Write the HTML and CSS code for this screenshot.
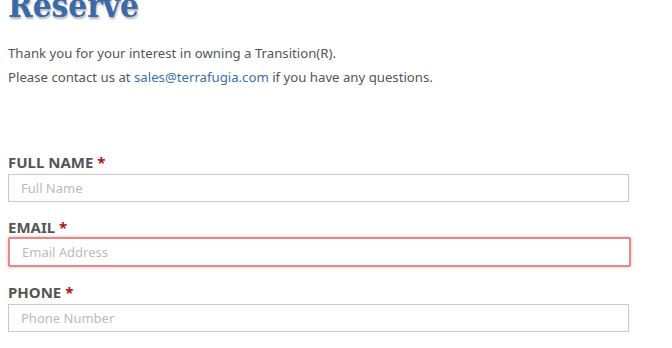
FILE: index.html
```html
<!DOCTYPE html>
<html lang="en">
<head>
<meta charset="UTF-8">
<meta name="viewport" content="width=device-width, initial-scale=1.0">
<title>Reserve</title>
<link rel="stylesheet" href="styles.css">
</head>
<body>

<h1 class="title">Reserve</h1>

<div class="intro">
    <p>Thank you for your interest in owning a Transition(R).</p>
    <p>Please contact us at <a href="#">sales@terrafugia.com</a> if you have any questions.</p>
</div>

<!-- RESERVE FORM -->
<form class="reserve-form">
    <div class="field">
        <label>FULL NAME <span class="req">*</span></label>
        <input type="text" placeholder="Full Name">
    </div>
    <div class="field">
        <label>EMAIL <span class="req">*</span></label>
        <input type="text" class="error" placeholder="Email Address">
    </div>
    <div class="field">
        <label>PHONE <span class="req">*</span></label>
        <input type="text" placeholder="Phone Number">
    </div>
    <div class="field">
        <label>COUNTRY <span class="req">*</span></label>
    </div>
</form>

</body>
</html>
```

FILE: styles.css
```css
body {
    margin: 0;
    padding: 0 8px;
    background: #fff;
    color: #555;
    font-family: "Noto Sans", Arial, sans-serif;
}
.title {
    margin: -14px 0 0;
    font-family: "DejaVu Serif", Georgia, serif;
    font-size: 33px;
    font-weight: bold;
    font-stretch: condensed;
    line-height: 40px;
    color: #3b6aa9;
    text-shadow: 1px 2px 2px rgba(0,0,0,0.3);
}
.intro {
    margin-top: 15px;
    font-size: 13.2px;
    line-height: 24px;
}
.intro p { margin: 0; }
.intro a { color: #3a6fa6; text-decoration: none; }
.reserve-form { margin-top: 63px; }
.field { margin-bottom: 15px; }
.field label {
    display: block;
    font-size: 15px;
    font-weight: bold;
    line-height: 20px;
    color: #555;
    margin-bottom: 2px;
}
.req { color: #b11; }
.field input {
    display: block;
    box-sizing: border-box;
    width: 621px;
    height: 28px;
    padding: 0 12px;
    border: 1px solid #c8c8c8;
    border-radius: 0;
    font-family: "Noto Sans", Arial, sans-serif;
    font-size: 13px;
    color: #555;
}
.field input::placeholder { color: #bbb; }
.field input.error {
    width: 623px;
    height: 30px;
    margin-top: -2px;
    border: 2px solid #e08a8c;
    border-radius: 2px;
    box-shadow: 0 0 3px rgba(220,80,80,0.5);
}
```
